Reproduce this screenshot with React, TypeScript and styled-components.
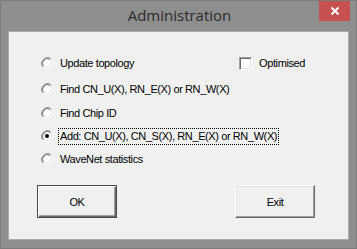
import React from "react";
import styled, { createGlobalStyle } from "styled-components";

const GlobalStyle = createGlobalStyle`
  html, body {
    margin: 0;
    padding: 0;
    background: #8e8e8e;
  }
`;

const Frame = styled.div`
  width: 357px;
  height: 249px;
  box-sizing: border-box;
  border: 1px solid #7b7b7b;
  background: #8e8e8e;
  padding: 0 7px 8px 7px;
  display: flex;
  flex-direction: column;
`;

const TitleBar = styled.div`
  height: 30px;
  position: relative;
  display: flex;
  align-items: center;
  justify-content: center;
`;

const Title = styled.span`
  font-family: "Open Sans", "Noto Sans", sans-serif;
  font-size: 15px;
  color: #2b2b2b;
  margin-top: -2px;
  margin-left: 2px;
`;

const CloseButton = styled.div`
  position: absolute;
  top: 0;
  right: -1px;
  width: 31px;
  height: 20px;
  background: #c75050;
  display: flex;
  align-items: center;
  justify-content: center;
`;

const Client = styled.div`
  flex: 1;
  background: #f0f0f0;
  box-sizing: border-box;
  border: 1px solid #ababab;
  font-family: "Liberation Sans", Arial, sans-serif;
  font-size: 11px;
  letter-spacing: -0.4px;
  color: #000;
  padding: 22px 0 0 32px;
  display: flex;
  flex-direction: column;
`;

const TopRow = styled.div`
  display: flex;
  align-items: center;
`;

const OptionList = styled.div`
  display: flex;
  flex-direction: column;
`;

const Option = styled.label<{ $gap: number }>`
  display: flex;
  align-items: center;
  height: 18px;
  margin-bottom: ${(p) => p.$gap}px;
`;

const RadioMark = styled.svg`
  width: 12px;
  height: 12px;
  flex: none;
`;

const Label = styled.span<{ $focused?: boolean }>`
  margin-left: 5px;
  padding: 1px 1px 2px 1px;
  border: 1px dotted ${(p) => (p.$focused ? "#000" : "transparent")};
  white-space: nowrap;
`;

const CheckOption = styled.label`
  display: flex;
  align-items: center;
  margin-left: auto;
  margin-right: 41px;
  height: 18px;
`;

const CheckBox = styled.span`
  width: 13px;
  height: 13px;
  box-sizing: border-box;
  background: #fff;
  border-top: 1px solid #a0a0a0;
  border-left: 1px solid #a0a0a0;
  border-right: 1px solid #fff;
  border-bottom: 1px solid #fff;
  box-shadow: inset 1px 1px 0 #696969, inset -1px -1px 0 #e3e3e3;
`;

const ButtonRow = styled.div`
  display: flex;
  justify-content: space-between;
  margin: 17px 33px 0 -4px;
`;

const Button = styled.div<{ $default?: boolean }>`
  width: 80px;
  height: 33px;
  box-sizing: border-box;
  background: #f0f0f0;
  display: flex;
  align-items: center;
  justify-content: center;
  font-family: "Liberation Sans", Arial, sans-serif;
  font-size: 11px;
  border: 1px solid;
  border-color: ${(p) => (p.$default ? "#4a4a4a" : "#fff #696969 #696969 #fff")};
  box-shadow: ${(p) =>
    p.$default
      ? "inset 1px 1px 0 #fff, inset -1px -1px 0 #696969, inset -2px -2px 0 #a0a0a0"
      : "inset -1px -1px 0 #a0a0a0, inset 1px 1px 0 #e3e3e3"};
`;

const Radio: React.FC<{ checked?: boolean }> = ({ checked }) => (
  <RadioMark viewBox="0 0 12 12">
    <path d="M10.2 1.8 A6 6 0 0 0 1.8 10.2" stroke="#a0a0a0" strokeWidth="1" fill="none" />
    <path d="M1.8 10.2 A6 6 0 0 0 10.2 1.8" stroke="#fff" strokeWidth="1" fill="none" />
    <circle cx="6" cy="6" r="4.5" fill="#fff" />
    <path d="M9.5 2.5 A5 5 0 0 0 2.5 9.5" stroke="#696969" strokeWidth="1" fill="none" />
    <path d="M2.5 9.5 A5 5 0 0 0 9.5 2.5" stroke="#e3e3e3" strokeWidth="1" fill="none" />
    {checked && <circle cx="6" cy="6" r="2" fill="#000" />}
  </RadioMark>
);

const options = [
  { text: "Update topology", gap: 8 },
  { text: "Find CN_U(X), RN_E(X) or RN_W(X)", gap: 6 },
  { text: "Find Chip ID", gap: 5 },
  { text: "Add: CN_U(X), CN_S(X), RN_E(X) or RN_W(X)", gap: 5, checked: true },
  { text: "WaveNet statistics", gap: 0 },
];

const App: React.FC = () => {
  return (
    <>
      <GlobalStyle />
      <Frame>
        <TitleBar>
          <Title>Administration</Title>
          <CloseButton>
            <svg width="10" height="8" viewBox="0 0 10 8">
              <path d="M1.5 0.5 L8.5 7.5 M8.5 0.5 L1.5 7.5" stroke="#fff" strokeWidth="2" />
            </svg>
          </CloseButton>
        </TitleBar>
        <Client>
          <OptionList>
            {options.map((o, i) =>
              i === 0 ? (
                <TopRow key={o.text}>
                  <Option $gap={o.gap}>
                    <Radio />
                    <Label>{o.text}</Label>
                  </Option>
                  <CheckOption style={{ marginBottom: o.gap }}>
                    <CheckBox />
                    <Label>Optimised</Label>
                  </CheckOption>
                </TopRow>
              ) : (
                <Option key={o.text} $gap={o.gap}>
                  <Radio checked={o.checked} />
                  <Label $focused={o.checked}>{o.text}</Label>
                </Option>
              )
            )}
          </OptionList>
          <ButtonRow>
            <Button $default>OK</Button>
            <Button>Exit</Button>
          </ButtonRow>
        </Client>
      </Frame>
    </>
  );
};

export default App;
